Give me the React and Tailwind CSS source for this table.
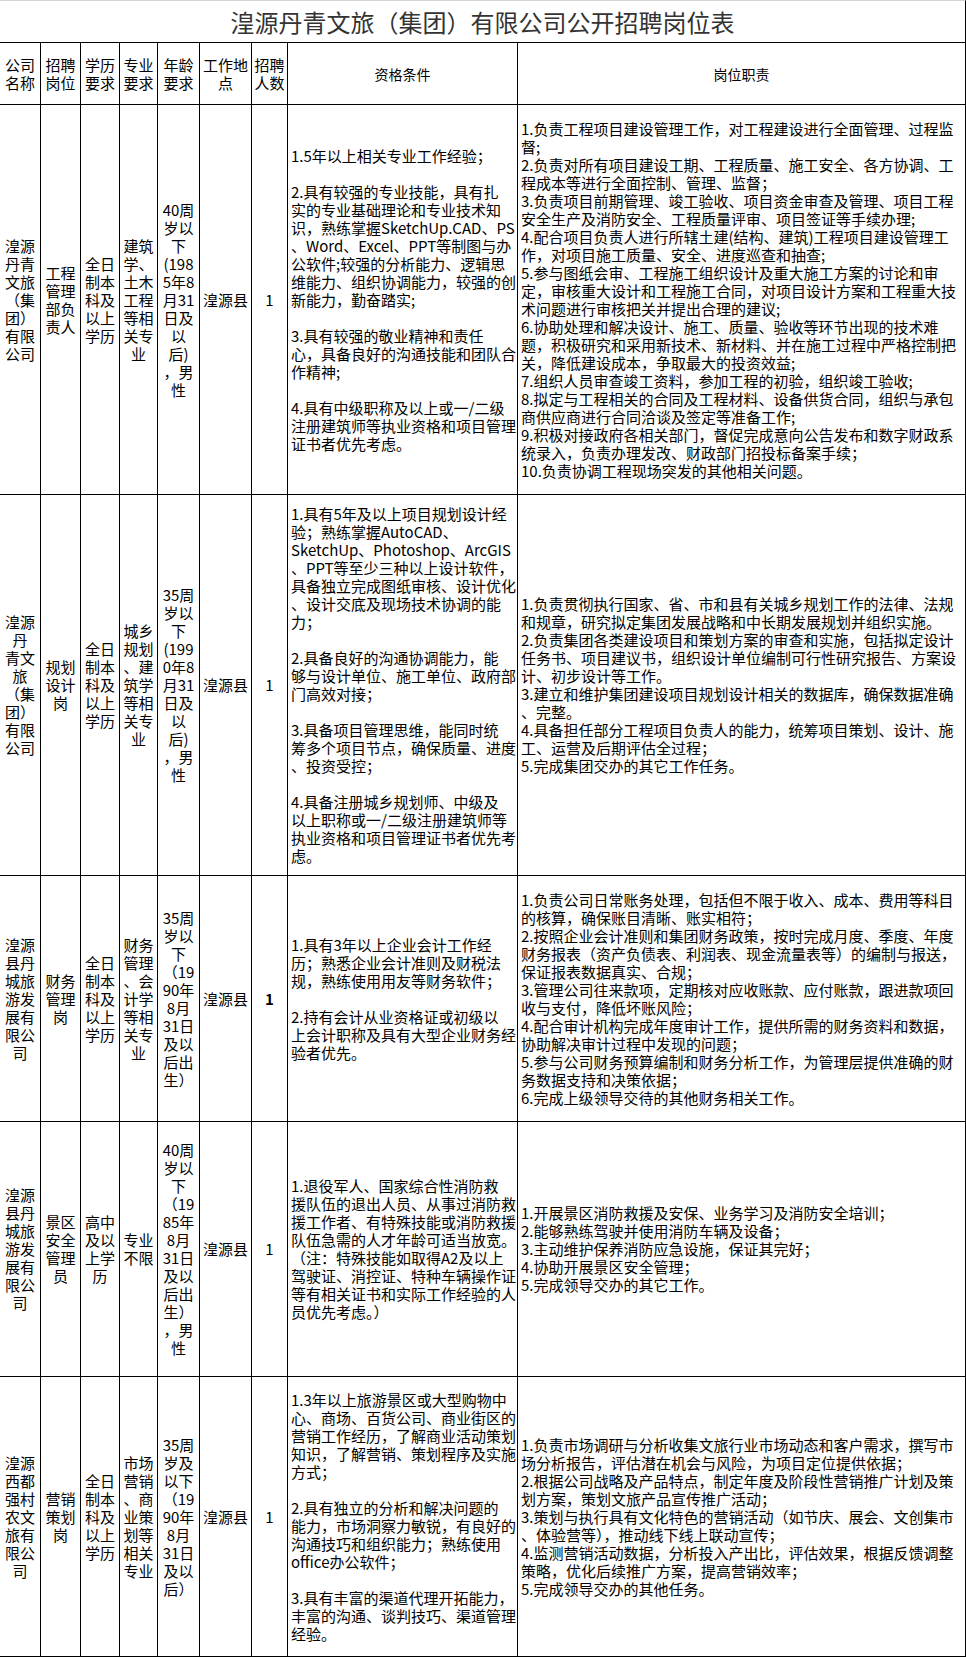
import React from "react";

const FONT = { fontFamily: '"Noto Sans CJK SC", "Noto Sans", sans-serif' };

function Lines({ text, center }) {
  const parts = text.split("|");
  return (
    <div className={center ? "text-center" : "text-left"}>
      {parts.map((p, i) =>
        p === "" ? (
          <div key={i} className="h-[18px]" />
        ) : (
          <div key={i} className="whitespace-nowrap">
            {p}
          </div>
        )
      )}
    </div>
  );
}

function Cell({ children, last, className = "" }) {
  return (
    <div
      className={
        "flex items-center border-b border-black " +
        (last ? "" : "") +
        " border-r " +
        className
      }
    >
      {children}
    </div>
  );
}

const rows = [
  {
    h: "h-[390px]",
    c: [
      "湟源|丹青|文旅|（集|团）|有限|公司",
      "工程|管理|部负|责人",
      "全日|制本|科及|以上|学历",
      "建筑|学、|土木|工程|等相|关专|业",
      "40周|岁以|下|(198|5年8|月31|日及|以|后)|，男|性",
      "湟源县",
      "1",
    ],
    q: "1.5年以上相关专业工作经验；||2.具有较强的专业技能，具有扎|实的专业基础理论和专业技术知|识，熟练掌握SketchUp.CAD、PS|、Word、Excel、PPT等制图与办|公软件;较强的分析能力、逻辑思|维能力、组织协调能力，较强的创|新能力，勤奋踏实;||3.具有较强的敬业精神和责任|心，具备良好的沟通技能和团队合|作精神;||4.具有中级职称及以上或一/二级|注册建筑师等执业资格和项目管理|证书者优先考虑。",
    d: "1.负责工程项目建设管理工作，对工程建设进行全面管理、过程监|督;|2.负责对所有项目建设工期、工程质量、施工安全、各方协调、工|程成本等进行全面控制、管理、监督；|3.负责项目前期管理、竣工验收、项目资金审查及管理、项目工程|安全生产及消防安全、工程质量评审、项目签证等手续办理;|4.配合项目负责人进行所辖土建(结构、建筑)工程项目建设管理工|作，对项目施工质量、安全、进度巡查和抽查;|5.参与图纸会审、工程施工组织设计及重大施工方案的讨论和审|定，审核重大设计和工程施工合同，对项目设计方案和工程重大技|术问题进行审核把关并提出合理的建议;|6.协助处理和解决设计、施工、质量、验收等环节出现的技术难|题，积极研究和采用新技术、新材料、并在施工过程中严格控制把|关，降低建设成本，争取最大的投资效益;|7.组织人员审查竣工资料，参加工程的初验，组织竣工验收;|8.拟定与工程相关的合同及工程材料、设备供货合同，组织与承包|商供应商进行合同洽谈及签定等准备工作;|9.积极对接政府各相关部门，督促完成意向公告发布和数字财政系|统录入，负责办理发改、财政部门招投标备案手续；|10.负责协调工程现场突发的其他相关问题。",
  },
  {
    h: "h-[381px]",
    c: [
      "湟源|丹|青文|旅|（集|团）|有限|公司",
      "规划|设计|岗",
      "全日|制本|科及|以上|学历",
      "城乡|规划|、建|筑学|等相|关专|业",
      "35周|岁以|下|(199|0年8|月31|日及|以|后)|，男|性",
      "湟源县",
      "1",
    ],
    q: "1.具有5年及以上项目规划设计经|验；熟练掌握AutoCAD、|SketchUp、Photoshop、ArcGIS|、PPT等至少三种以上设计软件，|具备独立完成图纸审核、设计优化|、设计交底及现场技术协调的能|力；||2.具备良好的沟通协调能力，能|够与设计单位、施工单位、政府部|门高效对接；||3.具备项目管理思维，能同时统|筹多个项目节点，确保质量、进度|、投资受控；||4.具备注册城乡规划师、中级及|以上职称或一/二级注册建筑师等|执业资格和项目管理证书者优先考|虑。",
    d: "1.负责贯彻执行国家、省、市和县有关城乡规划工作的法律、法规|和规章，研究拟定集团发展战略和中长期发展规划并组织实施。|2.负责集团各类建设项目和策划方案的审查和实施，包括拟定设计|任务书、项目建议书，组织设计单位编制可行性研究报告、方案设|计、初步设计等工作。|3.建立和维护集团建设项目规划设计相关的数据库，确保数据准确|、完整。|4.具备担任部分工程项目负责人的能力，统筹项目策划、设计、施|工、运营及后期评估全过程；|5.完成集团交办的其它工作任务。",
  },
  {
    h: "h-[246px]",
    c: [
      "湟源|县丹|城旅|游发|展有|限公|司",
      "财务|管理|岗",
      "全日|制本|科及|以上|学历",
      "财务|管理|、会|计学|等相|关专|业",
      "35周|岁以|下|（19|90年|8月|31日|及以|后出|生）",
      "湟源县",
      "1",
    ],
    bold: true,
    q: "1.具有3年以上企业会计工作经|历；熟悉企业会计准则及财税法|规，熟练使用用友等财务软件；||2.持有会计从业资格证或初级以|上会计职称及具有大型企业财务经|验者优先。",
    d: "1.负责公司日常账务处理，包括但不限于收入、成本、费用等科目|的核算，确保账目清晰、账实相符；|2.按照企业会计准则和集团财务政策，按时完成月度、季度、年度|财务报表（资产负债表、利润表、现金流量表等）的编制与报送，|保证报表数据真实、合规；|3.管理公司往来款项，定期核对应收账款、应付账款，跟进款项回|收与支付，降低坏账风险；|4.配合审计机构完成年度审计工作，提供所需的财务资料和数据，|协助解决审计过程中发现的问题；|5.参与公司财务预算编制和财务分析工作，为管理层提供准确的财|务数据支持和决策依据；|6.完成上级领导交待的其他财务相关工作。",
  },
  {
    h: "h-[255px]",
    c: [
      "湟源|县丹|城旅|游发|展有|限公|司",
      "景区|安全|管理|员",
      "高中|及以|上学|历",
      "专业|不限",
      "40周|岁以|下|（19|85年|8月|31日|及以|后出|生）|，男|性",
      "湟源县",
      "1",
    ],
    q: "1.退役军人、国家综合性消防救|援队伍的退出人员、从事过消防救|援工作者、有特殊技能或消防救援|队伍急需的人才年龄可适当放宽。|（注：特殊技能如取得A2及以上|驾驶证、消控证、特种车辆操作证|等有相关证书和实际工作经验的人|员优先考虑。）",
    d: "1.开展景区消防救援及安保、业务学习及消防安全培训；|2.能够熟练驾驶并使用消防车辆及设备；|3.主动维护保养消防应急设施，保证其完好；|4.协助开展景区安全管理；|5.完成领导交办的其它工作。",
  },
  {
    h: "h-[280px]",
    c: [
      "湟源|西都|强村|农文|旅有|限公|司",
      "营销|策划|岗",
      "全日|制本|科及|以上|学历",
      "市场|营销|、商|业策|划等|相关|专业",
      "35周|岁及|以下|（19|90年|8月|31日|及以|后）",
      "湟源县",
      "1",
    ],
    q: "1.3年以上旅游景区或大型购物中|心、商场、百货公司、商业街区的|营销工作经历，了解商业活动策划|知识，了解营销、策划程序及实施|方式；||2.具有独立的分析和解决问题的|能力，市场洞察力敏锐，有良好的|沟通技巧和组织能力；熟练使用|office办公软件；||3.具有丰富的渠道代理开拓能力，|丰富的沟通、谈判技巧、渠道管理|经验。",
    d: "1.负责市场调研与分析收集文旅行业市场动态和客户需求，撰写市|场分析报告，评估潜在机会与风险，为项目定位提供依据；|2.根据公司战略及产品特点，制定年度及阶段性营销推广计划及策|划方案，策划文旅产品宣传推广活动；|3.策划与执行具有文化特色的营销活动（如节庆、展会、文创集市|、体验营等），推动线下线上联动宣传；|4.监测营销活动数据，分析投入产出比，评估效果，根据反馈调整|策略，优化后续推广方案，提高营销效率；|5.完成领导交办的其他任务。",
  },
];

const GRID =
  "grid grid-cols-[41px_40px_39px_38px_42px_52px_36px_230px_448px]";

export default function App() {
  const headers = ["公司|名称", "招聘|岗位", "学历|要求", "专业|要求", "年龄|要求", "工作地|点", "招聘|人数"];
  return (
    <div className="w-[966px] bg-white text-black text-[15px] leading-[18px]" style={FONT}>
      <div className="h-[43px] border-t border-t-[#d4d4d4] border-b border-r border-black flex items-center justify-center text-[24px] leading-[28px] text-[#333]">
        湟源丹青文旅（集团）有限公司公开招聘岗位表
      </div>
      <div className={GRID + " h-[62px]"}>
        {headers.map((h, i) => (
          <Cell key={i} className="justify-center">
            <Lines text={h} center />
          </Cell>
        ))}
        <Cell className="justify-center text-[14px]">资格条件</Cell>
        <Cell className="justify-center text-[14px]">岗位职责</Cell>
      </div>
      {rows.map((r, ri) => (
        <div key={ri} className={GRID + " " + r.h}>
          {r.c.map((t, ci) => (
            <Cell
              key={ci}
              className={
                "justify-center" + (ci === 6 && r.bold ? " font-bold" : "")
              }
            >
              <Lines text={t} center />
            </Cell>
          ))}
          <Cell className="pl-[3px]">
            <Lines text={r.q} />
          </Cell>
          <Cell className="pl-[3px]">
            <Lines text={r.d} />
          </Cell>
        </div>
      ))}
    </div>
  );
}
